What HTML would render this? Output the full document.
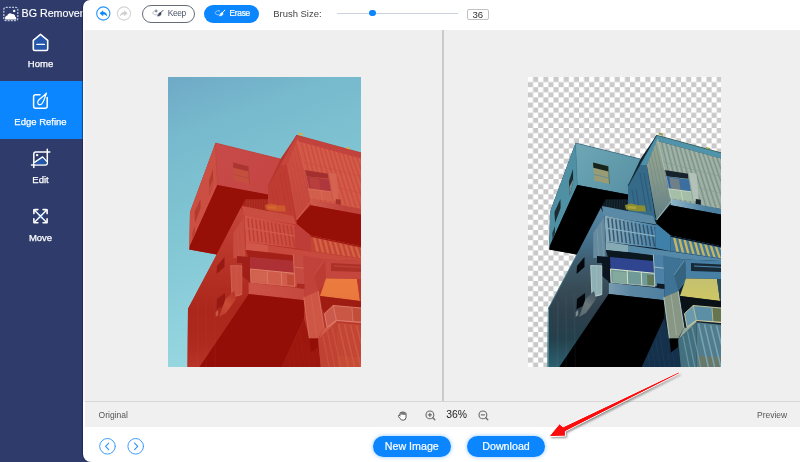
<!DOCTYPE html>
<html><head><meta charset="utf-8">
<style>
*{box-sizing:border-box;margin:0;padding:0}
html,body{width:800px;height:462px;overflow:hidden;background:#2e3b6b;font-family:"Liberation Sans",sans-serif}
#side{will-change:transform;position:absolute;left:0;top:0;width:84px;height:462px;background:#2e3b6b;color:#fff}
#logo{position:absolute;left:21.5px;top:6px;font-size:10.7px;white-space:nowrap;line-height:14px;-webkit-text-stroke:0.15px #fff}
.nav{position:absolute;left:0;width:83px;height:58px}
.nav span{position:absolute;left:0;width:81px;text-align:center;top:35px;line-height:12px;font-size:9.5px;-webkit-text-stroke:0.25px #fff}
.nav.act{background:#0b86fe}
#icons{position:absolute;left:0;top:0}
#main{will-change:transform;position:absolute;left:83px;top:0;width:717px;height:462px;background:#fff;border-radius:7px 0 0 8px;overflow:hidden;box-shadow:-1px 0 1px rgba(20,30,80,.6)}
#canvas{position:absolute;left:2px;top:30px;width:715px;height:372px;background:#efefef;box-shadow:-2px 0 0 #f6f6f6}
#div{position:absolute;left:359.2px;top:30px;width:1.6px;height:372px;background:#cacaca}
#status{position:absolute;left:2px;top:401px;width:715px;height:25.5px;background:#f0f0f0;border-top:1px solid #d6d6d6;font-size:8.2px;color:#555}
.btn{position:absolute;top:5px;height:17.5px;border-radius:9px;font-size:8.6px;line-height:17.5px;white-space:nowrap}
.btn span{position:absolute;top:0}
.pill{position:absolute;top:436px;height:20.5px;border-radius:11px;background:#0b86fe;color:#fff;font-size:10.7px;line-height:20.5px;text-align:center;box-shadow:0 0 4px rgba(11,134,254,.45);-webkit-text-stroke:0.2px #fff}
.photo{position:absolute;top:77px;width:193px;height:290px;overflow:hidden}
.photo svg{position:absolute;left:0;top:0}
#ov{position:absolute;left:0;top:0;pointer-events:none}
</style></head><body>
<div id="side">
<div id="logo">BG Remover</div>
<div class="nav" style="top:23px"><span>Home</span></div>
<div class="nav act" style="top:81px"><span>Edge Refine</span></div>
<div class="nav" style="top:139px"><span>Edit</span></div>
<div class="nav" style="top:197px"><span>Move</span></div>
<svg id="icons" width="84" height="260" viewBox="0 0 84 260" fill="none" stroke="#fff" stroke-linecap="round" stroke-linejoin="round">
<!-- logo -->
<rect x="3.8" y="7.3" width="14" height="13.2" rx="2" stroke="#b9c3dc" stroke-width="1.3" stroke-dasharray="2 1.1" stroke-linecap="butt"/>
<path d="M5.2 19.6 C4.6 17 6 15.6 7.4 15.6 C7.8 13.4 10.4 12.4 12.2 14.2 C13.6 13.8 15 14.8 15.2 16.4 C16.4 17 16.6 18.8 16 19.6 Z" fill="#fff" stroke="none"/>
<circle cx="14.2" cy="10.9" r="1.2" fill="#fff" stroke="none"/>
<!-- home -->
<path d="M40.5 34.4 L47.7 40.3 V49 Q47.7 50.5 46.2 50.5 H34.8 Q33.3 50.5 33.3 49 V40.3 Z" fill="#2457a8" stroke-width="1.6"/>
<path d="M36.8 44.4 H44.4" stroke-width="1.3"/>
<!-- edge refine -->
<path d="M40 94.8 H35.6 Q33.6 94.8 33.6 96.8 V106.2 Q33.6 108.2 35.6 108.2 H45.2 Q47.2 108.2 47.2 106.2 V97.6" stroke-width="1.5"/>
<path d="M46.4 93.2 C44.4 96 40.2 97.8 38.4 100.4 C36.6 103.2 38.4 105.6 41 104.4 C43.8 103 44.4 98.2 46.4 93.2 Z" stroke-width="1.3" fill="#0b86fe"/>
<!-- edit -->
<path d="M31.5 164.9 H45.3 Q47.3 164.9 47.3 162.9 V149.2 M49.8 152 H35.8 Q33.8 152 33.8 154 V167.6" stroke-width="1.5"/>
<path d="M34.6 162.6 L42.6 157 L46.6 161.4 V163 Q46.6 164.2 45.4 164.2 H34.6 Z" fill="#2457a8" stroke="none"/>
<path d="M34.5 162.4 L42.6 156.9 L46.8 161.4" stroke-width="1.3"/>
<circle cx="37.1" cy="155.1" r="1.2" fill="#fff" stroke="none"/>
<!-- move -->
<path d="M37 216.2 L40.5 212.6 L44 216.2 L40.5 219.8 Z" fill="#2457a8" stroke="none"/>
<path d="M34 209.7 L47 222.7 M47 209.7 L34 222.7" stroke-width="1.4"/>
<path d="M33.9 213.6 V210.6 Q33.9 209.6 34.9 209.6 H37.9 M43.1 209.6 H46.1 Q47.1 209.6 47.1 210.6 V213.6 M47.1 218.8 V221.8 Q47.1 222.8 46.1 222.8 H43.1 M37.9 222.8 H34.9 Q33.9 222.8 33.9 221.8 V218.8" stroke-width="1.6"/>
</svg>
</div>
<div id="main">
<div id="canvas"></div>
<div id="div"></div>
<div class="btn" style="left:59px;width:52.5px;border:1px solid #666b78;color:#444;line-height:15.2px"><span style="left:24.8px;font-size:8.4px;letter-spacing:-0.4px;color:#4a5468">Keep</span></div>
<div class="btn" style="left:121px;width:55px;background:#0b86fe;color:#fff"><span style="left:25.5px;font-size:8.4px;letter-spacing:-0.3px;-webkit-text-stroke:0.2px #fff">Erase</span></div>
<div style="position:absolute;left:190.3px;top:6.5px;font-size:9.45px;color:#444;line-height:13px;white-space:nowrap">Brush Size:</div>
<div style="position:absolute;left:253.5px;top:12.5px;width:121.5px;height:1px;background:#cbd3de"></div>
<div style="position:absolute;left:286px;top:9.7px;width:6.8px;height:6.8px;border-radius:4px;background:#0b86fe"></div>
<div style="position:absolute;left:384px;top:8.5px;width:21.5px;height:11.5px;border:1px solid #c2c2c2;border-radius:2px;font-size:9.6px;line-height:9px;text-align:center;color:#333;background:#fff">36</div>
<div id="status">
<span style="position:absolute;left:13.6px;top:8.2px;line-height:10px;font-size:8.5px">Original</span>
<span style="position:absolute;left:672px;top:8.2px;line-height:10px;font-size:8.5px">Preview</span>
<span style="position:absolute;left:361.3px;top:7px;font-size:10.4px;color:#222;line-height:12px">36%</span>
</div>
<div class="pill" style="left:290px;width:77.5px">New Image</div>
<div class="pill" style="left:384px;width:78px">Download</div>
</div>
<!-- original photo with red mask -->
<div class="photo" style="left:168px">
<svg width="193" height="290" viewBox="0 0 193 290">
<defs><linearGradient id="sky" x1="0" y1="0" x2="0.25" y2="1">
<stop offset="0" stop-color="#6fa9c6"/><stop offset="0.2" stop-color="#77b9cd"/><stop offset="0.5" stop-color="#80c5d3"/><stop offset="1" stop-color="#98d8e2"/></linearGradient></defs>
<rect width="193" height="290" fill="url(#sky)"/>
<defs>
<linearGradient id="gLL" x1="0" y1="131" x2="0" y2="290" gradientUnits="userSpaceOnUse">
<stop offset="0" stop-color="#c9544a"/>
<stop offset="0.25" stop-color="#bc4034"/>
<stop offset="0.45" stop-color="#b03428"/>
<stop offset="0.65" stop-color="#a62a1e"/>
<stop offset="0.85" stop-color="#aa2e22"/>
<stop offset="1" stop-color="#b83c2e"/>
</linearGradient>
<linearGradient id="gAL" x1="47" y1="66" x2="100" y2="118" gradientUnits="userSpaceOnUse">
<stop offset="0" stop-color="#cc5a5a"/>
<stop offset="1" stop-color="#c85252"/>
</linearGradient>
<linearGradient id="gCL" x1="76" y1="0" x2="128" y2="0" gradientUnits="userSpaceOnUse">
<stop offset="0" stop-color="#d8685a"/>
<stop offset="1" stop-color="#d05a4c"/>
</linearGradient>
<linearGradient id="gBL" x1="80" y1="0" x2="137" y2="0" gradientUnits="userSpaceOnUse">
<stop offset="0" stop-color="#d2645a"/>
<stop offset="1" stop-color="#c9564c"/>
</linearGradient>
<linearGradient id="gBLL" x1="0" y1="62" x2="0" y2="143" gradientUnits="userSpaceOnUse">
<stop offset="0" stop-color="#d46250"/>
<stop offset="1" stop-color="#c8544a"/>
</linearGradient>
<linearGradient id="gBBL" x1="143" y1="0" x2="178" y2="0" gradientUnits="userSpaceOnUse">
<stop offset="0" stop-color="#d46a5c"/>
<stop offset="1" stop-color="#c04e48"/>
</linearGradient>
<linearGradient id="gWL" x1="52" y1="240" x2="68" y2="216" gradientUnits="userSpaceOnUse">
<stop offset="0" stop-color="#bc4636"/>
<stop offset="0.5" stop-color="#cc5a40"/>
<stop offset="1" stop-color="#b43a2c"/>
</linearGradient>
<linearGradient id="gYL" x1="0" y1="201" x2="0" y2="224" gradientUnits="userSpaceOnUse">
<stop offset="0" stop-color="#fa9a4c"/>
<stop offset="1" stop-color="#f8944a"/>
</linearGradient>
</defs>
<polygon points="47.5,66 112.5,82 128.6,58.2 193,75.8 193,290 19.5,290 20,231.7 48.75,177.5 21.3,172.4 22,135" fill="#b83c30"/>
<polygon points="47.5,66 112.5,82 100,108.75 100,117.5 49.3,108" fill="url(#gAL)"/>
<polygon points="47.5,66 49.3,108 38.9,131 22,168.6 21.3,172.4 22,135" fill="#d05f52"/>
<polygon points="49.3,108 100,117.5 100,122.5 77.5,122.5 72.8,131 48.9,177.4 21.3,172.4 22,168.6 38.9,131" fill="#8a0c04"/>
<polygon points="65,85.5 80.3,89.3 81.5,106.9 66.2,103.7" fill="#c85f4c"/>
<polygon points="65,85.5 80.3,89.3 80.6,94.5 65.4,90.8" fill="#a63e3a"/>
<line x1="65.80" y1="97.50" x2="81.00" y2="101.00" stroke="#b85048" stroke-width="0.9"/>
<line x1="80.30" y1="89.30" x2="81.50" y2="106.90" stroke="#b04a40" stroke-width="0.8"/>
<polygon points="45,92 45.2,105 41.5,119 41,104" fill="#b04438"/>
<polygon points="41.3,110 45.2,102 45.2,105 41.5,119" fill="#c45a4c"/>
<polygon points="32.5,122 32.6,131 27,146 26.5,135" fill="#b04438"/>
<polygon points="27,149 27,156 24.5,163 24.3,156" fill="#b84a3c"/>
<line x1="47.50" y1="66.00" x2="49.30" y2="108.00" stroke="#c4554c" stroke-width="0.7"/>
<line x1="47.50" y1="66.00" x2="112.50" y2="82.00" stroke="#c04a44" stroke-width="0.6"/>
<polygon points="128.6,58.2 129.5,64 118.8,88 127,139.4 128.5,143 100,134 100,108.75 111.9,88" fill="#c0463c"/>
<line x1="104.00" y1="112.00" x2="107.29" y2="134.00" stroke="#b64036" stroke-width="0.9" opacity="0.8"/>
<line x1="108.00" y1="112.00" x2="111.48" y2="134.00" stroke="#b64036" stroke-width="0.9" opacity="0.8"/>
<line x1="112.00" y1="96.00" x2="118.58" y2="134.00" stroke="#b64036" stroke-width="0.9" opacity="0.8"/>
<line x1="116.00" y1="96.00" x2="122.92" y2="134.00" stroke="#b64036" stroke-width="0.9" opacity="0.8"/>
<line x1="120.00" y1="96.00" x2="127.26" y2="134.00" stroke="#b64036" stroke-width="0.9" opacity="0.8"/>
<polygon points="128.6,58.2 129.5,64 118.8,88 111.9,88" fill="#c8524a"/>
<polygon points="129.5,62 143.75,123.75 128.5,143 118.8,88" fill="url(#gBLL)"/>
<line x1="121.00" y1="82.65" x2="132.11" y2="138.44" stroke="#c4544a" stroke-width="0.8" opacity="0.9"/>
<line x1="123.20" y1="77.31" x2="135.07" y2="134.70" stroke="#c4544a" stroke-width="0.8" opacity="0.9"/>
<line x1="125.40" y1="71.96" x2="138.06" y2="130.93" stroke="#c4544a" stroke-width="0.8" opacity="0.9"/>
<line x1="127.60" y1="66.62" x2="141.08" y2="127.12" stroke="#c4544a" stroke-width="0.8" opacity="0.9"/>
<line x1="122.00" y1="97.00" x2="136.50" y2="91.50" stroke="#c8584c" stroke-width="0.6"/>
<line x1="125.50" y1="120.00" x2="140.50" y2="110.00" stroke="#c8584c" stroke-width="0.6"/>
<polygon points="128.6,58.2 193,75.8 193,81.5 129.5,64" fill="#c4504a"/>
<polygon points="129.5,64 193,81.5 193,131.9 143.75,123.75" fill="#d96955"/>
<line x1="133.50" y1="65.10" x2="147.60" y2="124.39" stroke="#c9574a" stroke-width="0.9" opacity="0.9"/>
<line x1="138.10" y1="66.37" x2="152.71" y2="125.23" stroke="#c9574a" stroke-width="0.9" opacity="0.9"/>
<line x1="142.70" y1="67.64" x2="157.81" y2="126.08" stroke="#c9574a" stroke-width="0.9" opacity="0.9"/>
<line x1="147.30" y1="68.91" x2="162.89" y2="126.92" stroke="#c9574a" stroke-width="0.9" opacity="0.9"/>
<line x1="151.90" y1="70.17" x2="167.96" y2="127.76" stroke="#c9574a" stroke-width="0.9" opacity="0.9"/>
<line x1="156.50" y1="71.44" x2="173.02" y2="128.59" stroke="#c9574a" stroke-width="0.9" opacity="0.9"/>
<line x1="161.10" y1="72.71" x2="178.06" y2="129.43" stroke="#c9574a" stroke-width="0.9" opacity="0.9"/>
<line x1="165.70" y1="73.98" x2="183.09" y2="130.26" stroke="#c9574a" stroke-width="0.9" opacity="0.9"/>
<line x1="170.30" y1="75.24" x2="188.11" y2="131.09" stroke="#c9574a" stroke-width="0.9" opacity="0.9"/>
<line x1="174.90" y1="76.51" x2="193.00" y2="131.56" stroke="#c9574a" stroke-width="0.9" opacity="0.9"/>
<line x1="179.50" y1="77.78" x2="193.00" y2="117.65" stroke="#c9574a" stroke-width="0.9" opacity="0.9"/>
<line x1="184.10" y1="79.05" x2="193.00" y2="104.60" stroke="#c9574a" stroke-width="0.9" opacity="0.9"/>
<line x1="188.70" y1="80.31" x2="193.00" y2="92.33" stroke="#c9574a" stroke-width="0.9" opacity="0.9"/>
<line x1="135.80" y1="65.74" x2="150.16" y2="124.81" stroke="#e27a64" stroke-width="0.8" opacity="0.7"/>
<line x1="140.40" y1="67.00" x2="155.26" y2="125.65" stroke="#e27a64" stroke-width="0.8" opacity="0.7"/>
<line x1="145.00" y1="68.27" x2="160.35" y2="126.50" stroke="#e27a64" stroke-width="0.8" opacity="0.7"/>
<line x1="149.60" y1="69.54" x2="165.43" y2="127.34" stroke="#e27a64" stroke-width="0.8" opacity="0.7"/>
<line x1="154.20" y1="70.81" x2="170.49" y2="128.17" stroke="#e27a64" stroke-width="0.8" opacity="0.7"/>
<line x1="158.80" y1="72.07" x2="175.54" y2="129.01" stroke="#e27a64" stroke-width="0.8" opacity="0.7"/>
<line x1="163.40" y1="73.34" x2="180.58" y2="129.84" stroke="#e27a64" stroke-width="0.8" opacity="0.7"/>
<line x1="168.00" y1="74.61" x2="185.60" y2="130.68" stroke="#e27a64" stroke-width="0.8" opacity="0.7"/>
<line x1="172.60" y1="75.88" x2="190.62" y2="131.51" stroke="#e27a64" stroke-width="0.8" opacity="0.7"/>
<line x1="177.20" y1="77.15" x2="193.00" y2="124.50" stroke="#e27a64" stroke-width="0.8" opacity="0.7"/>
<line x1="181.80" y1="78.41" x2="193.00" y2="111.02" stroke="#e27a64" stroke-width="0.8" opacity="0.7"/>
<line x1="186.40" y1="79.68" x2="193.00" y2="98.37" stroke="#e27a64" stroke-width="0.8" opacity="0.7"/>
<line x1="191.00" y1="80.95" x2="193.00" y2="86.46" stroke="#e27a64" stroke-width="0.8" opacity="0.7"/>
<line x1="134.50" y1="85.00" x2="193.00" y2="99.50" stroke="#cc5c4e" stroke-width="0.6"/>
<line x1="139.00" y1="104.00" x2="193.00" y2="116.00" stroke="#cc5c4e" stroke-width="0.6"/>
<polygon points="136.4,93 160.2,96.8 160.2,101.8 137.6,99.3" fill="#9c3636"/>
<polygon points="139,99.5 161,102.5 163,115 141.5,112" fill="#aa3f4a"/>
<polygon points="141,100.5 151,102 152.5,113.5 142.5,112" fill="#b84a4a"/>
<polygon points="137.6,99 141,100 143,112 140,111.5" fill="#a83c48"/>
<polygon points="140.2,111.8 165.2,115 165.9,124.4 142,121.2" fill="#d9745e"/>
<line x1="140.20" y1="111.80" x2="165.20" y2="115.00" stroke="#e68a74" stroke-width="0.8"/>
<line x1="153.00" y1="113.50" x2="154.50" y2="123.00" stroke="#e68a74" stroke-width="0.7"/>
<polygon points="160.2,95.5 168.4,96.8 170.9,123.1 165.2,124.4" fill="#dd7a66"/>
<line x1="160.20" y1="95.50" x2="165.20" y2="124.40" stroke="#c4564a" stroke-width="0.6"/>
<polygon points="167.8,122 172.8,122.8 172.8,128 167.8,127.2" fill="#a03a30"/>
<polygon points="142.7,121.9 193,131.9 193,137.6 142.7,128.2" fill="url(#gBBL)"/>
<polygon points="128.5,143 142.7,128.2 193,137.6 193,169.2 142.7,158.5 128.9,147.3" fill="#8a0c04"/>
<line x1="143.75" y1="123.75" x2="128.50" y2="143.00" stroke="#dc7866" stroke-width="1.1"/>
<line x1="128.60" y1="58.20" x2="100.00" y2="108.75" stroke="#b04038" stroke-width="0.8"/>
<line x1="128.60" y1="58.20" x2="193.00" y2="75.80" stroke="#b8483c" stroke-width="0.7"/>
<line x1="129.50" y1="62.00" x2="143.75" y2="123.75" stroke="#e07c68" stroke-width="0.6"/>
<polygon points="131,55.5 135,56.5 134.5,58.8 130.5,57.5" fill="#d8b040"/>
<polygon points="178,70 182,71 182,72.6 178,71.6" fill="#d8b040"/>
<polygon points="77.5,122.5 100,122.5 100,134 74,129" fill="#a02a20"/>
<line x1="79.00" y1="123.00" x2="78.40" y2="130.60" stroke="#bc4636" stroke-width="0.5"/>
<line x1="81.60" y1="123.00" x2="81.00" y2="130.91" stroke="#bc4636" stroke-width="0.5"/>
<line x1="84.20" y1="123.00" x2="83.60" y2="131.22" stroke="#bc4636" stroke-width="0.5"/>
<line x1="86.80" y1="123.00" x2="86.20" y2="131.54" stroke="#bc4636" stroke-width="0.5"/>
<line x1="89.40" y1="123.00" x2="88.80" y2="131.85" stroke="#bc4636" stroke-width="0.5"/>
<line x1="92.00" y1="123.00" x2="91.40" y2="132.16" stroke="#bc4636" stroke-width="0.5"/>
<line x1="94.60" y1="123.00" x2="94.00" y2="132.47" stroke="#bc4636" stroke-width="0.5"/>
<line x1="97.20" y1="123.00" x2="96.60" y2="132.78" stroke="#bc4636" stroke-width="0.5"/>
<line x1="99.80" y1="123.00" x2="99.20" y2="133.10" stroke="#bc4636" stroke-width="0.5"/>
<polygon points="97,128 103,126.5 110,128.2 117,128.5 118,134.5 108,134.2 98,132.5" fill="#d06c34"/>
<polygon points="100,129 108,129.5 108,132 100,131.5" fill="#dc8038"/>
<polygon points="74,129 100,134 125,139 128.5,147.5 100,143 75.3,138.5" fill="#cf5c50"/>
<polygon points="76.5,138.5 127,148 127.6,171 77.8,164.9" fill="url(#gCL)"/>
<line x1="80.00" y1="140.96" x2="82.13" y2="164.13" stroke="#b74437" stroke-width="1.5" opacity="0.85"/>
<line x1="83.90" y1="141.69" x2="86.19" y2="164.63" stroke="#b74437" stroke-width="1.5" opacity="0.85"/>
<line x1="87.80" y1="142.43" x2="90.24" y2="165.12" stroke="#b74437" stroke-width="1.5" opacity="0.85"/>
<line x1="91.70" y1="143.16" x2="94.29" y2="165.62" stroke="#b74437" stroke-width="1.5" opacity="0.85"/>
<line x1="95.60" y1="143.89" x2="98.33" y2="166.11" stroke="#b74437" stroke-width="1.5" opacity="0.85"/>
<line x1="99.50" y1="144.63" x2="102.37" y2="166.61" stroke="#b74437" stroke-width="1.5" opacity="0.85"/>
<line x1="103.40" y1="145.36" x2="106.41" y2="167.10" stroke="#b74437" stroke-width="1.5" opacity="0.85"/>
<line x1="107.30" y1="146.09" x2="110.44" y2="167.60" stroke="#b74437" stroke-width="1.5" opacity="0.85"/>
<line x1="111.20" y1="146.83" x2="114.47" y2="168.09" stroke="#b74437" stroke-width="1.5" opacity="0.85"/>
<line x1="115.10" y1="147.56" x2="118.49" y2="168.58" stroke="#b74437" stroke-width="1.5" opacity="0.85"/>
<line x1="119.00" y1="148.30" x2="122.51" y2="169.08" stroke="#b74437" stroke-width="1.5" opacity="0.85"/>
<line x1="122.90" y1="149.03" x2="126.53" y2="169.57" stroke="#b74437" stroke-width="1.5" opacity="0.85"/>
<line x1="126.80" y1="149.76" x2="130.54" y2="170.06" stroke="#b74437" stroke-width="1.5" opacity="0.85"/>
<line x1="77.00" y1="150.80" x2="127.30" y2="159.20" stroke="#d96c5c" stroke-width="1.3"/>
<polygon points="127,148 129,147.3 142.7,158.5 142.7,174.3 127.6,171" fill="#c04843"/>
<polygon points="142.7,158.5 193,169.2 193,181.8 142.7,174.3" fill="#c65244"/>
<polygon points="145,160.49 147.6,161.09 150.99,175.04 148.39,174.44" fill="#df7850"/>
<polygon points="150.2,161.6 152.8,162.2 156.27,175.82 153.67,175.22" fill="#df7850"/>
<polygon points="155.4,162.7 158,163.3 161.54,176.59 158.94,175.99" fill="#df7850"/>
<polygon points="160.6,163.81 163.2,164.41 166.8,177.37 164.2,176.77" fill="#df7850"/>
<polygon points="165.8,164.91 168.4,165.51 172.06,178.14 169.46,177.54" fill="#df7850"/>
<polygon points="171,166.02 173.6,166.62 177.31,178.92 174.71,178.32" fill="#df7850"/>
<polygon points="176.2,167.13 178.8,167.73 182.55,179.7 179.95,179.1" fill="#df7850"/>
<polygon points="181.4,168.23 184,168.83 187.79,180.47 185.19,179.87" fill="#df7850"/>
<polygon points="186.6,169.34 189.2,169.94 193.02,181.25 190.42,180.65" fill="#df7850"/>
<polygon points="191.8,170.44 194.4,171.04 198.24,182.02 195.64,181.42" fill="#df7850"/>
<polygon points="142.7,158.5 193,169.2 193,170.4 142.7,159.7" fill="#98180e"/>
<polygon points="72.8,131 76.5,138.5 77.8,164.9 77.8,173 80,180 80.7,217 31.4,290 19.5,290 20,231.7 48.75,177.5" fill="url(#gLL)"/>
<polygon points="77.8,164.9 193,181.8 193,184 156.5,182.4 100,174.9 77.8,173" fill="#cc574c"/>
<polygon points="77.8,164.9 100,168.2 100,174.9 77.8,173" fill="#d66a5a"/>
<polygon points="76,140 65.2,156 65.2,181 77.5,181" fill="#ca584a"/>
<line x1="69.00" y1="152.00" x2="70.97" y2="181.00" stroke="#dc7866" stroke-width="0.6" opacity="0.45"/>
<line x1="73.00" y1="146.00" x2="75.69" y2="181.00" stroke="#dc7866" stroke-width="0.6" opacity="0.45"/>
<polygon points="78,173 125,178.5 125,184 80,180" fill="#9a221a"/>
<polygon points="69,179 82,180 82.5,206 74,199 74,186 69,186" fill="#98201a"/>
<polygon points="82,180 125,184 125.5,196 82.5,192.5" fill="#a8363e"/>
<polygon points="82.5,192 126.5,196.3 127,209.5 83,205.5" fill="#d6725c"/>
<polygon points="84.5,194 99,195.5 99.5,206 85,204.5" fill="#da7a64"/>
<polygon points="119,197.5 126.5,198.2 127,208.5 119.5,208" fill="#c45a44"/>
<line x1="82.50" y1="192.00" x2="126.50" y2="196.30" stroke="#eaa08a" stroke-width="1"/>
<line x1="83.00" y1="205.50" x2="127.00" y2="209.50" stroke="#e4907c" stroke-width="0.7"/>
<line x1="82.50" y1="192.00" x2="83.00" y2="205.50" stroke="#e89a86" stroke-width="0.9"/>
<line x1="99.22" y1="193.63" x2="99.72" y2="207.02" stroke="#e89a86" stroke-width="0.9"/>
<line x1="113.30" y1="195.01" x2="113.80" y2="208.30" stroke="#e89a86" stroke-width="0.9"/>
<line x1="126.50" y1="196.30" x2="127.00" y2="209.50" stroke="#e89a86" stroke-width="0.9"/>
<polygon points="62.7,188.5 73.8,188.8 73.8,217.5 64,220" fill="#cf6050"/>
<line x1="62.70" y1="188.50" x2="64.00" y2="220.00" stroke="#d87a68" stroke-width="0.9"/>
<line x1="73.80" y1="188.80" x2="73.80" y2="217.50" stroke="#d87a68" stroke-width="0.8"/>
<line x1="62.70" y1="188.50" x2="73.80" y2="188.80" stroke="#d87a68" stroke-width="0.8"/>
<line x1="64.00" y1="220.00" x2="73.80" y2="217.50" stroke="#dc806c" stroke-width="1"/>
<line x1="68.50" y1="188.70" x2="69.00" y2="218.70" stroke="#d47060" stroke-width="0.6"/>
<polygon points="80.7,205.7 127.8,210.8 136.6,212 136.6,223.3 80.7,217" fill="url(#gBL)"/>
<polygon points="56.5,180 56.5,190 48.5,197 49,189" fill="#8c1a12"/>
<polygon points="57,216 57,228 48.5,232.3 49,222" fill="#8c1a12"/>
<polygon points="57.5,222 66,214 68,222 58,236 51,240" fill="url(#gWL)"/>
<polygon points="50.2,233 50.2,238 47.7,240 47.7,235" fill="#c86858"/>
<polygon points="80.7,217 136.6,223.3 136,241.5 113.8,290 31.4,290" fill="#860a03"/>
<polygon points="136,241.5 141.4,261 150.2,261.6 152.7,290 113.8,290" fill="#94160c"/>
<line x1="120.32" y1="277.69" x2="122.00" y2="290.00" stroke="#a02014" stroke-width="0.6" opacity="0.8"/>
<line x1="124.06" y1="269.56" x2="127.00" y2="290.00" stroke="#a02014" stroke-width="0.6" opacity="0.8"/>
<line x1="127.69" y1="261.63" x2="132.00" y2="290.00" stroke="#a02014" stroke-width="0.6" opacity="0.8"/>
<line x1="131.24" y1="253.91" x2="137.00" y2="290.00" stroke="#a02014" stroke-width="0.6" opacity="0.8"/>
<line x1="139.66" y1="276.00" x2="142.00" y2="290.00" stroke="#a02014" stroke-width="0.6" opacity="0.8"/>
<line x1="142.44" y1="264.00" x2="147.00" y2="290.00" stroke="#a02014" stroke-width="0.6" opacity="0.8"/>
<polygon points="125.3,177.5 135.3,178.6 136.6,210 127,209" fill="#c85a50"/>
<line x1="125.30" y1="177.50" x2="127.00" y2="209.00" stroke="#e28c78" stroke-width="0.8"/>
<line x1="135.30" y1="178.60" x2="136.60" y2="210.00" stroke="#c85850" stroke-width="0.7"/>
<line x1="126.00" y1="190.00" x2="136.00" y2="191.20" stroke="#e28c78" stroke-width="0.7"/>
<polygon points="129,206.4 137.8,207.2 137.8,211.8 129,211" fill="#a62e26"/>
<polygon points="135.3,178.6 156.5,182.4 158,204 150.2,214 136.6,220.3 136.6,210" fill="#c24e46"/>
<polygon points="135.8,220.3 150.2,214 156,251 150.2,261.6 141.4,261.5" fill="#d36855"/>
<line x1="135.80" y1="220.30" x2="141.40" y2="261.50" stroke="#e08a78" stroke-width="0.9"/>
<line x1="150.20" y1="214.00" x2="156.00" y2="251.00" stroke="#e08a78" stroke-width="0.9"/>
<line x1="143.00" y1="217.50" x2="148.50" y2="258.00" stroke="#dc7e6c" stroke-width="0.6"/>
<polygon points="141.4,261.5 150.2,261.6 150,270 143,275.4" fill="#860a03"/>
<polygon points="157,183 146,198 150.2,214 158,201" fill="#bc463e"/>
<polygon points="157,182.5 193,184 193,202 158,201.5" fill="#c8544a"/>
<polygon points="163,186 193,187.5 193,195 163,194" fill="#aa382e"/>
<line x1="166.00" y1="189.00" x2="193.00" y2="190.30" stroke="#c4504a" stroke-width="1"/>
<line x1="157.00" y1="182.50" x2="146.00" y2="198.00" stroke="#d66a5a" stroke-width="0.6"/>
<polygon points="158,201.5 189,202 192,224 152,219" fill="url(#gYL)"/>
<polygon points="189,202 193,202 193,224 192,224" fill="#b84035"/>
<polygon points="152,219 192,224 193,224 193,231 165.2,228.5 156.5,236.6 154,232" fill="#961c12"/>
<polygon points="165.2,228.5 193,231 193,245.4 168.4,243.5" fill="#cf6856"/>
<polygon points="184,231 193,231.5 193,245 185,244.5" fill="#c45c46"/>
<polygon points="165.2,228.5 168.4,243.5 159,250.4 156.5,236.6" fill="#d26e5e"/>
<polygon points="159,250.4 168.4,243.5 168.4,245.3 150.2,262.8 156,251" fill="#d66c5a"/>
<line x1="165.20" y1="228.50" x2="193.00" y2="231.00" stroke="#eaa08a" stroke-width="0.9"/>
<line x1="165.20" y1="228.50" x2="156.50" y2="236.60" stroke="#eaa08a" stroke-width="0.9"/>
<line x1="168.40" y1="243.50" x2="193.00" y2="245.40" stroke="#eaa08a" stroke-width="1.1"/>
<line x1="168.40" y1="243.50" x2="159.00" y2="250.40" stroke="#eaa08a" stroke-width="1.1"/>
<line x1="165.20" y1="228.50" x2="168.40" y2="243.50" stroke="#eaa08a" stroke-width="0.8"/>
<line x1="156.50" y1="236.60" x2="159.00" y2="250.40" stroke="#eaa08a" stroke-width="0.9"/>
<line x1="184.00" y1="231.00" x2="185.00" y2="244.80" stroke="#eaa08a" stroke-width="0.7"/>
<polygon points="150.2,262.8 168.4,245.3 168.4,290 152.7,290" fill="#c24e3d"/>
<polygon points="168.4,245.3 193,247.8 193,290 168.4,290" fill="#c6523e"/>
<polygon points="170,279 193,280 193,290 171,290" fill="#c85a40"/>
<line x1="170.50" y1="246.75" x2="180.34" y2="290.00" stroke="#d8705a" stroke-width="1.5" opacity="0.75"/>
<line x1="176.50" y1="247.35" x2="186.62" y2="290.00" stroke="#d8705a" stroke-width="1.5" opacity="0.75"/>
<line x1="182.50" y1="247.95" x2="192.89" y2="290.00" stroke="#d8705a" stroke-width="1.5" opacity="0.75"/>
<line x1="188.50" y1="248.55" x2="199.15" y2="290.00" stroke="#d8705a" stroke-width="1.5" opacity="0.75"/>
<line x1="155.00" y1="259.00" x2="161.12" y2="290.00" stroke="#d26a55" stroke-width="1.2" opacity="0.7"/>
<line x1="159.50" y1="254.50" x2="166.82" y2="290.00" stroke="#d26a55" stroke-width="1.2" opacity="0.7"/>
<line x1="164.00" y1="250.00" x2="172.61" y2="290.00" stroke="#d26a55" stroke-width="1.2" opacity="0.7"/>
<line x1="30.00" y1="225.00" x2="29.43" y2="290.00" stroke="#e08070" stroke-width="1.4" opacity="0.07"/>
<line x1="38.00" y1="221.00" x2="38.36" y2="290.00" stroke="#e08070" stroke-width="1.4" opacity="0.06"/>
<line x1="46.00" y1="217.00" x2="47.42" y2="290.00" stroke="#e08070" stroke-width="1.4" opacity="0.05"/>
<polygon points="47.5,66 112.5,82 128.6,58.2 193,75.8 193,290 19.5,290 20,231.7 48.75,177.5 21.3,172.4 22,135" fill="#be1e14" opacity="0.24"/>
</svg>
</div>
<!-- preview with transparent background -->
<div class="photo" style="left:528px">
<svg width="193" height="290" viewBox="0 0 193 290">
<defs><pattern id="chk" width="10.2" height="10.2" patternUnits="userSpaceOnUse">
<rect width="10.2" height="10.2" fill="#fff"/><rect x="5.1" width="5.1" height="5.1" fill="#c9c9c9"/><rect y="5.1" width="5.1" height="5.1" fill="#c9c9c9"/></pattern></defs>
<rect width="193" height="290" fill="url(#chk)"/>
<defs>
<linearGradient id="gLR" x1="0" y1="131" x2="0" y2="290" gradientUnits="userSpaceOnUse">
<stop offset="0" stop-color="#5688a5"/>
<stop offset="0.12" stop-color="#4d7c98"/>
<stop offset="0.25" stop-color="#426a84"/>
<stop offset="0.36" stop-color="#3e5a6a"/>
<stop offset="0.5" stop-color="#384c58"/>
<stop offset="0.65" stop-color="#2e404c"/>
<stop offset="0.82" stop-color="#24404c"/>
<stop offset="1" stop-color="#2c5f6f"/>
</linearGradient>
<linearGradient id="gAR" x1="47" y1="66" x2="100" y2="118" gradientUnits="userSpaceOnUse">
<stop offset="0" stop-color="#6fa6b6"/>
<stop offset="0.5" stop-color="#639dad"/>
<stop offset="1" stop-color="#5891a4"/>
</linearGradient>
<linearGradient id="gCR" x1="76" y1="0" x2="128" y2="0" gradientUnits="userSpaceOnUse">
<stop offset="0" stop-color="#8aacbb"/>
<stop offset="0.45" stop-color="#6c99b3"/>
<stop offset="1" stop-color="#4b83a9"/>
</linearGradient>
<linearGradient id="gBR" x1="80" y1="0" x2="137" y2="0" gradientUnits="userSpaceOnUse">
<stop offset="0" stop-color="#7b9db0"/>
<stop offset="0.4" stop-color="#5b87a4"/>
<stop offset="1" stop-color="#4f7fa0"/>
</linearGradient>
<linearGradient id="gBLR" x1="0" y1="62" x2="0" y2="143" gradientUnits="userSpaceOnUse">
<stop offset="0" stop-color="#9aa892"/>
<stop offset="0.5" stop-color="#84988c"/>
<stop offset="1" stop-color="#5f7c86"/>
</linearGradient>
<linearGradient id="gBBR" x1="143" y1="0" x2="178" y2="0" gradientUnits="userSpaceOnUse">
<stop offset="0" stop-color="#8fb6c8"/>
<stop offset="1" stop-color="#4a7fa0"/>
</linearGradient>
<linearGradient id="gWR" x1="52" y1="240" x2="68" y2="216" gradientUnits="userSpaceOnUse">
<stop offset="0" stop-color="#5a6a70"/>
<stop offset="0.5" stop-color="#6a7678"/>
<stop offset="1" stop-color="#3e5260"/>
</linearGradient>
<linearGradient id="gYR" x1="0" y1="201" x2="0" y2="224" gradientUnits="userSpaceOnUse">
<stop offset="0" stop-color="#c4c070"/>
<stop offset="1" stop-color="#cec764"/>
</linearGradient>
</defs>
<polygon points="47.5,66 112.5,82 128.6,58.2 193,75.8 193,290 19.5,290 20,231.7 48.75,177.5 21.3,172.4 22,135" fill="#10202e"/>
<polygon points="47.5,66 112.5,82 100,108.75 100,117.5 49.3,108" fill="url(#gAR)"/>
<polygon points="47.5,66 49.3,108 38.9,131 22,168.6 21.3,172.4 22,135" fill="#4f90a4"/>
<polygon points="49.3,108 100,117.5 100,122.5 77.5,122.5 72.8,131 48.9,177.4 21.3,172.4 22,168.6 38.9,131" fill="#000000"/>
<polygon points="65,85.5 80.3,89.3 81.5,106.9 66.2,103.7" fill="#989c74"/>
<polygon points="65,85.5 80.3,89.3 80.6,94.5 65.4,90.8" fill="#16241c"/>
<line x1="65.80" y1="97.50" x2="81.00" y2="101.00" stroke="#5d8a9a" stroke-width="0.9"/>
<line x1="80.30" y1="89.30" x2="81.50" y2="106.90" stroke="#4a6a60" stroke-width="0.8"/>
<polygon points="45,92 45.2,105 41.5,119 41,104" fill="#1c2a30"/>
<polygon points="41.3,110 45.2,102 45.2,105 41.5,119" fill="#6f8f90"/>
<polygon points="32.5,122 32.6,131 27,146 26.5,135" fill="#1c2a30"/>
<polygon points="27,149 27,156 24.5,163 24.3,156" fill="#243840"/>
<line x1="47.50" y1="66.00" x2="49.30" y2="108.00" stroke="#4a8aa2" stroke-width="0.7"/>
<line x1="47.50" y1="66.00" x2="112.50" y2="82.00" stroke="#356a80" stroke-width="0.6"/>
<polygon points="128.6,58.2 129.5,64 118.8,88 127,139.4 128.5,143 100,134 100,108.75 111.9,88" fill="#356a88"/>
<line x1="104.00" y1="112.00" x2="107.29" y2="134.00" stroke="#285470" stroke-width="0.9" opacity="0.8"/>
<line x1="108.00" y1="112.00" x2="111.48" y2="134.00" stroke="#285470" stroke-width="0.9" opacity="0.8"/>
<line x1="112.00" y1="96.00" x2="118.58" y2="134.00" stroke="#285470" stroke-width="0.9" opacity="0.8"/>
<line x1="116.00" y1="96.00" x2="122.92" y2="134.00" stroke="#285470" stroke-width="0.9" opacity="0.8"/>
<line x1="120.00" y1="96.00" x2="127.26" y2="134.00" stroke="#285470" stroke-width="0.9" opacity="0.8"/>
<polygon points="128.6,58.2 129.5,64 118.8,88 111.9,88" fill="#4b8fa8"/>
<polygon points="129.5,62 143.75,123.75 128.5,143 118.8,88" fill="url(#gBLR)"/>
<line x1="121.00" y1="82.65" x2="132.11" y2="138.44" stroke="#748c84" stroke-width="0.8" opacity="0.9"/>
<line x1="123.20" y1="77.31" x2="135.07" y2="134.70" stroke="#748c84" stroke-width="0.8" opacity="0.9"/>
<line x1="125.40" y1="71.96" x2="138.06" y2="130.93" stroke="#748c84" stroke-width="0.8" opacity="0.9"/>
<line x1="127.60" y1="66.62" x2="141.08" y2="127.12" stroke="#748c84" stroke-width="0.8" opacity="0.9"/>
<line x1="122.00" y1="97.00" x2="136.50" y2="91.50" stroke="#7f978c" stroke-width="0.6"/>
<line x1="125.50" y1="120.00" x2="140.50" y2="110.00" stroke="#7f978c" stroke-width="0.6"/>
<polygon points="128.6,58.2 193,75.8 193,81.5 129.5,64" fill="#4f94ab"/>
<polygon points="129.5,64 193,81.5 193,131.9 143.75,123.75" fill="#96aa9e"/>
<line x1="133.50" y1="65.10" x2="147.60" y2="124.39" stroke="#728a84" stroke-width="0.9" opacity="0.9"/>
<line x1="138.10" y1="66.37" x2="152.71" y2="125.23" stroke="#728a84" stroke-width="0.9" opacity="0.9"/>
<line x1="142.70" y1="67.64" x2="157.81" y2="126.08" stroke="#728a84" stroke-width="0.9" opacity="0.9"/>
<line x1="147.30" y1="68.91" x2="162.89" y2="126.92" stroke="#728a84" stroke-width="0.9" opacity="0.9"/>
<line x1="151.90" y1="70.17" x2="167.96" y2="127.76" stroke="#728a84" stroke-width="0.9" opacity="0.9"/>
<line x1="156.50" y1="71.44" x2="173.02" y2="128.59" stroke="#728a84" stroke-width="0.9" opacity="0.9"/>
<line x1="161.10" y1="72.71" x2="178.06" y2="129.43" stroke="#728a84" stroke-width="0.9" opacity="0.9"/>
<line x1="165.70" y1="73.98" x2="183.09" y2="130.26" stroke="#728a84" stroke-width="0.9" opacity="0.9"/>
<line x1="170.30" y1="75.24" x2="188.11" y2="131.09" stroke="#728a84" stroke-width="0.9" opacity="0.9"/>
<line x1="174.90" y1="76.51" x2="193.00" y2="131.56" stroke="#728a84" stroke-width="0.9" opacity="0.9"/>
<line x1="179.50" y1="77.78" x2="193.00" y2="117.65" stroke="#728a84" stroke-width="0.9" opacity="0.9"/>
<line x1="184.10" y1="79.05" x2="193.00" y2="104.60" stroke="#728a84" stroke-width="0.9" opacity="0.9"/>
<line x1="188.70" y1="80.31" x2="193.00" y2="92.33" stroke="#728a84" stroke-width="0.9" opacity="0.9"/>
<line x1="135.80" y1="65.74" x2="150.16" y2="124.81" stroke="#b4c4b4" stroke-width="0.8" opacity="0.7"/>
<line x1="140.40" y1="67.00" x2="155.26" y2="125.65" stroke="#b4c4b4" stroke-width="0.8" opacity="0.7"/>
<line x1="145.00" y1="68.27" x2="160.35" y2="126.50" stroke="#b4c4b4" stroke-width="0.8" opacity="0.7"/>
<line x1="149.60" y1="69.54" x2="165.43" y2="127.34" stroke="#b4c4b4" stroke-width="0.8" opacity="0.7"/>
<line x1="154.20" y1="70.81" x2="170.49" y2="128.17" stroke="#b4c4b4" stroke-width="0.8" opacity="0.7"/>
<line x1="158.80" y1="72.07" x2="175.54" y2="129.01" stroke="#b4c4b4" stroke-width="0.8" opacity="0.7"/>
<line x1="163.40" y1="73.34" x2="180.58" y2="129.84" stroke="#b4c4b4" stroke-width="0.8" opacity="0.7"/>
<line x1="168.00" y1="74.61" x2="185.60" y2="130.68" stroke="#b4c4b4" stroke-width="0.8" opacity="0.7"/>
<line x1="172.60" y1="75.88" x2="190.62" y2="131.51" stroke="#b4c4b4" stroke-width="0.8" opacity="0.7"/>
<line x1="177.20" y1="77.15" x2="193.00" y2="124.50" stroke="#b4c4b4" stroke-width="0.8" opacity="0.7"/>
<line x1="181.80" y1="78.41" x2="193.00" y2="111.02" stroke="#b4c4b4" stroke-width="0.8" opacity="0.7"/>
<line x1="186.40" y1="79.68" x2="193.00" y2="98.37" stroke="#b4c4b4" stroke-width="0.8" opacity="0.7"/>
<line x1="191.00" y1="80.95" x2="193.00" y2="86.46" stroke="#b4c4b4" stroke-width="0.8" opacity="0.7"/>
<line x1="134.50" y1="85.00" x2="193.00" y2="99.50" stroke="#869c92" stroke-width="0.6"/>
<line x1="139.00" y1="104.00" x2="193.00" y2="116.00" stroke="#869c92" stroke-width="0.6"/>
<polygon points="136.4,93 160.2,96.8 160.2,101.8 137.6,99.3" fill="#16222c"/>
<polygon points="139,99.5 161,102.5 163,115 141.5,112" fill="#3b6fa0"/>
<polygon points="141,100.5 151,102 152.5,113.5 142.5,112" fill="#6f8088"/>
<polygon points="137.6,99 141,100 143,112 140,111.5" fill="#2f5fa0"/>
<polygon points="140.2,111.8 165.2,115 165.9,124.4 142,121.2" fill="#a4bea8"/>
<line x1="140.20" y1="111.80" x2="165.20" y2="115.00" stroke="#d0dcc0" stroke-width="0.8"/>
<line x1="153.00" y1="113.50" x2="154.50" y2="123.00" stroke="#d0dcc0" stroke-width="0.7"/>
<polygon points="160.2,95.5 168.4,96.8 170.9,123.1 165.2,124.4" fill="#b2c2b8"/>
<line x1="160.20" y1="95.50" x2="165.20" y2="124.40" stroke="#7f958c" stroke-width="0.6"/>
<polygon points="167.8,122 172.8,122.8 172.8,128 167.8,127.2" fill="#15202a"/>
<polygon points="142.7,121.9 193,131.9 193,137.6 142.7,128.2" fill="url(#gBBR)"/>
<polygon points="128.5,143 142.7,128.2 193,137.6 193,169.2 142.7,158.5 128.9,147.3" fill="#000000"/>
<line x1="143.75" y1="123.75" x2="128.50" y2="143.00" stroke="#9fc0bc" stroke-width="1.1"/>
<line x1="128.60" y1="58.20" x2="100.00" y2="108.75" stroke="#1c3038" stroke-width="0.8"/>
<line x1="128.60" y1="58.20" x2="193.00" y2="75.80" stroke="#3a5a50" stroke-width="0.7"/>
<line x1="129.50" y1="62.00" x2="143.75" y2="123.75" stroke="#c0d0c0" stroke-width="0.6"/>
<polygon points="131,55.5 135,56.5 134.5,58.8 130.5,57.5" fill="#9aa050"/>
<polygon points="178,70 182,71 182,72.6 178,71.6" fill="#9aa050"/>
<polygon points="77.5,122.5 100,122.5 100,134 74,129" fill="#0d1a22"/>
<line x1="79.00" y1="123.00" x2="78.40" y2="130.60" stroke="#2a3c48" stroke-width="0.5"/>
<line x1="81.60" y1="123.00" x2="81.00" y2="130.91" stroke="#2a3c48" stroke-width="0.5"/>
<line x1="84.20" y1="123.00" x2="83.60" y2="131.22" stroke="#2a3c48" stroke-width="0.5"/>
<line x1="86.80" y1="123.00" x2="86.20" y2="131.54" stroke="#2a3c48" stroke-width="0.5"/>
<line x1="89.40" y1="123.00" x2="88.80" y2="131.85" stroke="#2a3c48" stroke-width="0.5"/>
<line x1="92.00" y1="123.00" x2="91.40" y2="132.16" stroke="#2a3c48" stroke-width="0.5"/>
<line x1="94.60" y1="123.00" x2="94.00" y2="132.47" stroke="#2a3c48" stroke-width="0.5"/>
<line x1="97.20" y1="123.00" x2="96.60" y2="132.78" stroke="#2a3c48" stroke-width="0.5"/>
<line x1="99.80" y1="123.00" x2="99.20" y2="133.10" stroke="#2a3c48" stroke-width="0.5"/>
<polygon points="97,128 103,126.5 110,128.2 117,128.5 118,134.5 108,134.2 98,132.5" fill="#8c8c30"/>
<polygon points="100,129 108,129.5 108,132 100,131.5" fill="#aca63a"/>
<polygon points="74,129 100,134 125,139 128.5,147.5 100,143 75.3,138.5" fill="#5a8aa6"/>
<polygon points="76.5,138.5 127,148 127.6,171 77.8,164.9" fill="url(#gCR)"/>
<line x1="80.00" y1="140.96" x2="82.13" y2="164.13" stroke="#2c4a60" stroke-width="1.5" opacity="0.85"/>
<line x1="83.90" y1="141.69" x2="86.19" y2="164.63" stroke="#2c4a60" stroke-width="1.5" opacity="0.85"/>
<line x1="87.80" y1="142.43" x2="90.24" y2="165.12" stroke="#2c4a60" stroke-width="1.5" opacity="0.85"/>
<line x1="91.70" y1="143.16" x2="94.29" y2="165.62" stroke="#2c4a60" stroke-width="1.5" opacity="0.85"/>
<line x1="95.60" y1="143.89" x2="98.33" y2="166.11" stroke="#2c4a60" stroke-width="1.5" opacity="0.85"/>
<line x1="99.50" y1="144.63" x2="102.37" y2="166.61" stroke="#2c4a60" stroke-width="1.5" opacity="0.85"/>
<line x1="103.40" y1="145.36" x2="106.41" y2="167.10" stroke="#2c4a60" stroke-width="1.5" opacity="0.85"/>
<line x1="107.30" y1="146.09" x2="110.44" y2="167.60" stroke="#2c4a60" stroke-width="1.5" opacity="0.85"/>
<line x1="111.20" y1="146.83" x2="114.47" y2="168.09" stroke="#2c4a60" stroke-width="1.5" opacity="0.85"/>
<line x1="115.10" y1="147.56" x2="118.49" y2="168.58" stroke="#2c4a60" stroke-width="1.5" opacity="0.85"/>
<line x1="119.00" y1="148.30" x2="122.51" y2="169.08" stroke="#2c4a60" stroke-width="1.5" opacity="0.85"/>
<line x1="122.90" y1="149.03" x2="126.53" y2="169.57" stroke="#2c4a60" stroke-width="1.5" opacity="0.85"/>
<line x1="126.80" y1="149.76" x2="130.54" y2="170.06" stroke="#2c4a60" stroke-width="1.5" opacity="0.85"/>
<line x1="77.00" y1="150.80" x2="127.30" y2="159.20" stroke="#86afc2" stroke-width="1.3"/>
<polygon points="127,148 129,147.3 142.7,158.5 142.7,174.3 127.6,171" fill="#3f80a8"/>
<polygon points="142.7,158.5 193,169.2 193,181.8 142.7,174.3" fill="#3f78a0"/>
<polygon points="145,160.49 147.6,161.09 150.99,175.04 148.39,174.44" fill="#c8b65c"/>
<polygon points="150.2,161.6 152.8,162.2 156.27,175.82 153.67,175.22" fill="#c8b65c"/>
<polygon points="155.4,162.7 158,163.3 161.54,176.59 158.94,175.99" fill="#c8b65c"/>
<polygon points="160.6,163.81 163.2,164.41 166.8,177.37 164.2,176.77" fill="#c8b65c"/>
<polygon points="165.8,164.91 168.4,165.51 172.06,178.14 169.46,177.54" fill="#c8b65c"/>
<polygon points="171,166.02 173.6,166.62 177.31,178.92 174.71,178.32" fill="#c8b65c"/>
<polygon points="176.2,167.13 178.8,167.73 182.55,179.7 179.95,179.1" fill="#c8b65c"/>
<polygon points="181.4,168.23 184,168.83 187.79,180.47 185.19,179.87" fill="#c8b65c"/>
<polygon points="186.6,169.34 189.2,169.94 193.02,181.25 190.42,180.65" fill="#c8b65c"/>
<polygon points="191.8,170.44 194.4,171.04 198.24,182.02 195.64,181.42" fill="#c8b65c"/>
<polygon points="142.7,158.5 193,169.2 193,170.4 142.7,159.7" fill="#0a1420"/>
<polygon points="72.8,131 76.5,138.5 77.8,164.9 77.8,173 80,180 80.7,217 31.4,290 19.5,290 20,231.7 48.75,177.5" fill="url(#gLR)"/>
<polygon points="77.8,164.9 193,181.8 193,184 156.5,182.4 100,174.9 77.8,173" fill="#5688a8"/>
<polygon points="77.8,164.9 100,168.2 100,174.9 77.8,173" fill="#86aab4"/>
<polygon points="76,140 65.2,156 65.2,181 77.5,181" fill="#668a9e"/>
<line x1="69.00" y1="152.00" x2="70.97" y2="181.00" stroke="#a0bcc0" stroke-width="0.6" opacity="0.45"/>
<line x1="73.00" y1="146.00" x2="75.69" y2="181.00" stroke="#a0bcc0" stroke-width="0.6" opacity="0.45"/>
<polygon points="78,173 125,178.5 125,184 80,180" fill="#0c1820"/>
<polygon points="69,179 82,180 82.5,206 74,199 74,186 69,186" fill="#0a1520"/>
<polygon points="82,180 125,184 125.5,196 82.5,192.5" fill="#2f4590"/>
<polygon points="82.5,192 126.5,196.3 127,209.5 83,205.5" fill="#6f9a98"/>
<polygon points="84.5,194 99,195.5 99.5,206 85,204.5" fill="#84aa9e"/>
<polygon points="119,197.5 126.5,198.2 127,208.5 119.5,208" fill="#5f7858"/>
<line x1="82.50" y1="192.00" x2="126.50" y2="196.30" stroke="#dce6cc" stroke-width="1"/>
<line x1="83.00" y1="205.50" x2="127.00" y2="209.50" stroke="#c8d8c8" stroke-width="0.7"/>
<line x1="82.50" y1="192.00" x2="83.00" y2="205.50" stroke="#dce6cc" stroke-width="0.9"/>
<line x1="99.22" y1="193.63" x2="99.72" y2="207.02" stroke="#dce6cc" stroke-width="0.9"/>
<line x1="113.30" y1="195.01" x2="113.80" y2="208.30" stroke="#dce6cc" stroke-width="0.9"/>
<line x1="126.50" y1="196.30" x2="127.00" y2="209.50" stroke="#dce6cc" stroke-width="0.9"/>
<polygon points="62.7,188.5 73.8,188.8 73.8,217.5 64,220" fill="#8fb0b4"/>
<line x1="62.70" y1="188.50" x2="64.00" y2="220.00" stroke="#bcd0d0" stroke-width="0.9"/>
<line x1="73.80" y1="188.80" x2="73.80" y2="217.50" stroke="#bcd0d0" stroke-width="0.8"/>
<line x1="62.70" y1="188.50" x2="73.80" y2="188.80" stroke="#bcd0d0" stroke-width="0.8"/>
<line x1="64.00" y1="220.00" x2="73.80" y2="217.50" stroke="#c8dcd8" stroke-width="1"/>
<line x1="68.50" y1="188.70" x2="69.00" y2="218.70" stroke="#a5bcc0" stroke-width="0.6"/>
<polygon points="80.7,205.7 127.8,210.8 136.6,212 136.6,223.3 80.7,217" fill="url(#gBR)"/>
<polygon points="56.5,180 56.5,190 48.5,197 49,189" fill="#04080c"/>
<polygon points="57,216 57,228 48.5,232.3 49,222" fill="#04080c"/>
<polygon points="57.5,222 66,214 68,222 58,236 51,240" fill="url(#gWR)"/>
<polygon points="50.2,233 50.2,238 47.7,240 47.7,235" fill="#7a8890"/>
<polygon points="80.7,217 136.6,223.3 136,241.5 113.8,290 31.4,290" fill="#000000"/>
<polygon points="136,241.5 141.4,261 150.2,261.6 152.7,290 113.8,290" fill="#14304a"/>
<line x1="120.32" y1="277.69" x2="122.00" y2="290.00" stroke="#1f4565" stroke-width="0.6" opacity="0.8"/>
<line x1="124.06" y1="269.56" x2="127.00" y2="290.00" stroke="#1f4565" stroke-width="0.6" opacity="0.8"/>
<line x1="127.69" y1="261.63" x2="132.00" y2="290.00" stroke="#1f4565" stroke-width="0.6" opacity="0.8"/>
<line x1="131.24" y1="253.91" x2="137.00" y2="290.00" stroke="#1f4565" stroke-width="0.6" opacity="0.8"/>
<line x1="139.66" y1="276.00" x2="142.00" y2="290.00" stroke="#1f4565" stroke-width="0.6" opacity="0.8"/>
<line x1="142.44" y1="264.00" x2="147.00" y2="290.00" stroke="#1f4565" stroke-width="0.6" opacity="0.8"/>
<polygon points="125.3,177.5 135.3,178.6 136.6,210 127,209" fill="#4c80a6"/>
<line x1="125.30" y1="177.50" x2="127.00" y2="209.00" stroke="#c0d4d0" stroke-width="0.8"/>
<line x1="135.30" y1="178.60" x2="136.60" y2="210.00" stroke="#5f8aa0" stroke-width="0.7"/>
<line x1="126.00" y1="190.00" x2="136.00" y2="191.20" stroke="#c0d4d0" stroke-width="0.7"/>
<polygon points="129,206.4 137.8,207.2 137.8,211.8 129,211" fill="#0e1a24"/>
<polygon points="135.3,178.6 156.5,182.4 158,204 150.2,214 136.6,220.3 136.6,210" fill="#3f7396"/>
<polygon points="135.8,220.3 150.2,214 156,251 150.2,261.6 141.4,261.5" fill="#889684"/>
<line x1="135.80" y1="220.30" x2="141.40" y2="261.50" stroke="#b8ccc8" stroke-width="0.9"/>
<line x1="150.20" y1="214.00" x2="156.00" y2="251.00" stroke="#b8ccc8" stroke-width="0.9"/>
<line x1="143.00" y1="217.50" x2="148.50" y2="258.00" stroke="#a8c0bc" stroke-width="0.6"/>
<polygon points="141.4,261.5 150.2,261.6 150,270 143,275.4" fill="#000000"/>
<polygon points="157,183 146,198 150.2,214 158,201" fill="#35637f"/>
<polygon points="157,182.5 193,184 193,202 158,201.5" fill="#477fa5"/>
<polygon points="163,186 193,187.5 193,195 163,194" fill="#182a38"/>
<line x1="166.00" y1="189.00" x2="193.00" y2="190.30" stroke="#4f8ab0" stroke-width="1"/>
<line x1="157.00" y1="182.50" x2="146.00" y2="198.00" stroke="#7faabc" stroke-width="0.6"/>
<polygon points="158,201.5 189,202 192,224 152,219" fill="url(#gYR)"/>
<polygon points="189,202 193,202 193,224 192,224" fill="#2a4a5a"/>
<polygon points="152,219 192,224 193,224 193,231 165.2,228.5 156.5,236.6 154,232" fill="#0a1218"/>
<polygon points="165.2,228.5 193,231 193,245.4 168.4,243.5" fill="#5a8fa5"/>
<polygon points="184,231 193,231.5 193,245 185,244.5" fill="#65754e"/>
<polygon points="165.2,228.5 168.4,243.5 159,250.4 156.5,236.6" fill="#6a9aac"/>
<polygon points="159,250.4 168.4,243.5 168.4,245.3 150.2,262.8 156,251" fill="#93a89c"/>
<line x1="165.20" y1="228.50" x2="193.00" y2="231.00" stroke="#d4cea0" stroke-width="0.9"/>
<line x1="165.20" y1="228.50" x2="156.50" y2="236.60" stroke="#d4cea0" stroke-width="0.9"/>
<line x1="168.40" y1="243.50" x2="193.00" y2="245.40" stroke="#d4cea0" stroke-width="1.1"/>
<line x1="168.40" y1="243.50" x2="159.00" y2="250.40" stroke="#d4cea0" stroke-width="1.1"/>
<line x1="165.20" y1="228.50" x2="168.40" y2="243.50" stroke="#d4cea0" stroke-width="0.8"/>
<line x1="156.50" y1="236.60" x2="159.00" y2="250.40" stroke="#d4cea0" stroke-width="0.9"/>
<line x1="184.00" y1="231.00" x2="185.00" y2="244.80" stroke="#d4cea0" stroke-width="0.7"/>
<polygon points="150.2,262.8 168.4,245.3 168.4,290 152.7,290" fill="#44707e"/>
<polygon points="168.4,245.3 193,247.8 193,290 168.4,290" fill="#527c8a"/>
<polygon points="170,279 193,280 193,290 171,290" fill="#6a7868"/>
<line x1="170.50" y1="246.75" x2="180.34" y2="290.00" stroke="#7fb2cc" stroke-width="1.5" opacity="0.75"/>
<line x1="176.50" y1="247.35" x2="186.62" y2="290.00" stroke="#7fb2cc" stroke-width="1.5" opacity="0.75"/>
<line x1="182.50" y1="247.95" x2="192.89" y2="290.00" stroke="#7fb2cc" stroke-width="1.5" opacity="0.75"/>
<line x1="188.50" y1="248.55" x2="199.15" y2="290.00" stroke="#7fb2cc" stroke-width="1.5" opacity="0.75"/>
<line x1="155.00" y1="259.00" x2="161.12" y2="290.00" stroke="#76a4b8" stroke-width="1.2" opacity="0.7"/>
<line x1="159.50" y1="254.50" x2="166.82" y2="290.00" stroke="#76a4b8" stroke-width="1.2" opacity="0.7"/>
<line x1="164.00" y1="250.00" x2="172.61" y2="290.00" stroke="#76a4b8" stroke-width="1.2" opacity="0.7"/>
<line x1="19.90" y1="290.00" x2="20.30" y2="231.70" stroke="#7fd0d8" stroke-width="0.8"/>
<line x1="20.30" y1="231.70" x2="48.75" y2="177.50" stroke="#5fb0c0" stroke-width="0.5"/>
<line x1="30.00" y1="225.00" x2="29.43" y2="290.00" stroke="#9fc0d0" stroke-width="1.4" opacity="0.07"/>
<line x1="38.00" y1="221.00" x2="38.36" y2="290.00" stroke="#9fc0d0" stroke-width="1.4" opacity="0.06"/>
<line x1="46.00" y1="217.00" x2="47.42" y2="290.00" stroke="#9fc0d0" stroke-width="1.4" opacity="0.05"/>
</svg>
</div>
<!-- overlay: toolbar icons, status icons, arrow -->
<svg id="ov" width="800" height="462" viewBox="0 0 800 462" fill="none" stroke-linecap="round" stroke-linejoin="round">
<defs><filter id="sh" x="-10%" y="-10%" width="120%" height="130%"><feGaussianBlur stdDeviation="0.9"/></filter></defs>
<!-- undo / redo -->
<circle cx="103.3" cy="13.5" r="6.6" stroke="#2492ff" stroke-width="1.1"/>
<path d="M99.6 13.2 L103.2 10.2 V12 C105.8 12 107.2 13.8 107.2 16.6 C106.2 15 105 14.4 103.2 14.4 V16.2 Z" fill="#0b86fe"/>
<circle cx="124" cy="13.5" r="6.6" stroke="#d4d4d4" stroke-width="1.1"/>
<path d="M127.7 13.2 L124.1 10.2 V12 C121.5 12 120.1 13.8 120.1 16.6 C121.1 15 122.3 14.4 124.1 14.4 V16.2 Z" fill="#d0d0d0"/>
<!-- keep brush -->
<g stroke="#3c4258" fill="#3c4258">
<path d="M162.9 10.5 L160.2 13.2" stroke-width="1" fill="none"/>
<path d="M160.6 12.6 C159.2 12.6 158.6 13.6 158.4 14.4 C158.2 15.2 157.8 15.7 157.3 15.9 C158.6 16.3 160.4 15.9 160.9 14.6 C161.2 13.8 161.1 13 160.6 12.6 Z" stroke-width="0.5"/>
<path d="M155 11 H157.2 M156.1 9.9 V12.1" stroke-width="0.7" fill="none"/>
<path d="M154.2 11.2 C152.6 11.6 152.4 13.4 153.6 14.2 C154.6 14.8 156 14.9 157.2 14.7" stroke="#9aa0ae" stroke-width="0.7" stroke-dasharray="1.3 0.8" fill="none"/>
</g>
<!-- erase brush -->
<g stroke="#fff" fill="#fff">
<path d="M224.8 10.2 L222.1 13" stroke-width="1" fill="none"/>
<path d="M222.5 12.4 C221.1 12.4 220.5 13.4 220.3 14.2 C220.1 15 219.7 15.5 219.2 15.7 C220.5 16.1 222.3 15.7 222.8 14.4 C223.1 13.6 223 12.8 222.5 12.4 Z" stroke-width="0.5"/>
<path d="M217.8 10.9 H219.6" stroke-width="0.7" fill="none"/>
<path d="M216.6 11.2 C215 11.6 214.8 13.4 216 14.2 C217 14.8 218.2 14.9 219.2 14.7" stroke="#bfe0ff" stroke-width="0.7" stroke-dasharray="1.3 0.8" fill="none"/>
</g>
<!-- hand -->
<path d="M399.9 415.4 V413.4 Q399.9 412.6 400.7 412.6 Q401.4 412.6 401.4 413.4 V412.6 Q401.4 411.8 402.2 411.8 Q403 411.8 403 412.6 V412.8 Q403 412 403.8 412 Q404.6 412 404.6 412.8 V413.4 Q404.6 412.8 405.3 412.8 Q406 412.8 406 413.6 V417.4 Q406 420.2 403.2 420.2 Q401 420.2 400 418.6 L398.5 416.4 Q398.1 415.5 398.9 415.2 Q399.4 415.1 399.9 415.8 Z" fill="#fff" stroke="#444" stroke-width="0.9"/>
<path d="M400 414.6 V413.2 H401.4 V412.4 H403 V412.6 H404.6 V413.4 H405.9 V415 Z" fill="#777" stroke="none"/>
<!-- zoom in / out -->
<circle cx="429.9" cy="414.9" r="3.9" stroke="#6a6a6a" stroke-width="1.1"/>
<path d="M432.8 417.8 L434.8 419.8" stroke="#6a6a6a" stroke-width="1.3"/>
<path d="M428.3 414.9 H431.5 M429.9 413.3 V416.5" stroke="#555" stroke-width="1"/>
<circle cx="482.9" cy="414.9" r="3.9" stroke="#6a6a6a" stroke-width="1.1"/>
<path d="M485.8 417.8 L487.8 419.8" stroke="#6a6a6a" stroke-width="1.3"/>
<path d="M481.3 414.9 H484.5" stroke="#555" stroke-width="1"/>
<!-- prev / next -->
<circle cx="107.5" cy="446.3" r="7.8" stroke="#3a9bff" stroke-width="1"/>
<path d="M108.7 443.2 L105.6 446.4 L108.7 449.6" stroke="#2a90ff" stroke-width="1.1"/>
<circle cx="135.7" cy="446.3" r="7.8" stroke="#3a9bff" stroke-width="1"/>
<path d="M134.6 443.2 L137.7 446.4 L134.6 449.6" stroke="#2a90ff" stroke-width="1.1"/>
<!-- red arrow -->
<path d="M680.7 374.1 L564.7 428.4 L560.9 425.3 L550.5 438.1 L567 437.7 L566.9 432.9 L680.7 375 Z" fill="#444" opacity="0.6" filter="url(#sh)" stroke="none"/>
<path d="M678.8 372.3 L563.2 426.9 L559.4 423.8 L549 436.6 L565.5 436.2 L565.4 431.4 L679.2 373.3 Z" fill="#fb0d0d" stroke="#fff" stroke-width="1"/>
<path d="M678.8 372.6 L563.6 427.6 L565 430.8 L679.1 373.1 Z" fill="#fb0d0d" stroke="none"/>
</svg>
</body></html>
